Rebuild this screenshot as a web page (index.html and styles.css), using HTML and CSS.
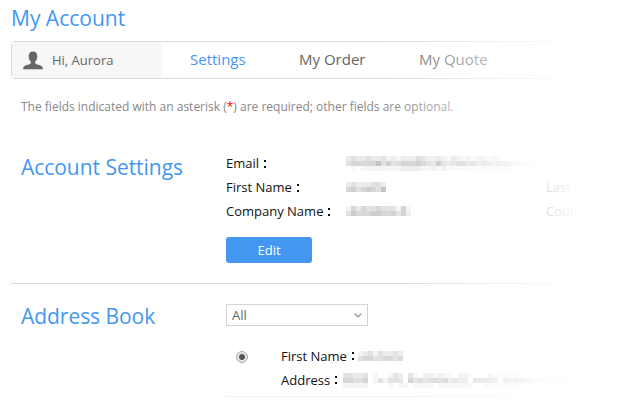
FILE: index.html
```html
<!DOCTYPE html>
<html lang="en">
<head>
<meta charset="utf-8">
<title>My Account</title>
<link rel="stylesheet" href="styles.css">
</head>
<body>
<main class="page">
  <h1>My Account</h1>
  <nav class="tabs">
    <div class="user">
      <svg class="avatar" width="20" height="19" viewBox="0 0 20 19"><path d="M10 .5C7.200.500 5.700 2.500 5.700 5.300c0 2.300.900 4.300 2.200 5.400v1.300c-.7 1.200-2 1.400-4.300 2.100C1.200 14.900.300 15.900 0 18.300h20c-.3-2.400-1.200-3.400-3.600-4.200-2.300-.7-3.600-.9-4.300-2.100v-1.300c1.300-1.100 2.200-3.100 2.200-5.400C14.300 2.500 12.800.500 10 .500z" fill="#666"/></svg>
      <span>Hi, Aurora</span>
    </div>
    <a class="tab active">Settings</a>
    <a class="tab order">My Order</a>
    <a class="tab quote">My Quote</a>
  </nav>
  <p class="note">The fields indicated with an asterisk (<b>*</b>) are required; other fields are optional.</p>
  <section class="account">
    <h2>Account Settings</h2>
    <div class="details">
      <div class="row"><span class="label">Email<i></i></span><span class="mask" data-rows="232232231212224322321321212212100000000/344444635345556543743455453443433221110/010111111112222112121111111111111000000"></span></div>
      <div class="row"><span class="label">First Name<i></i></span><span class="mask" data-rows="23222332/45345436"></span><span class="extra">Last Name</span></div>
      <div class="row"><span class="label">Company Name<i></i></span><span class="mask" data-rows="1424334333151/3544455445352"></span><span class="extra">Country</span></div>
      <button>Edit</button>
    </div>
  </section>
  <section class="address">
    <h2>Address Book</h2>
    <div class="book">
      <div class="select"><span>All</span><svg width="8" height="5" viewBox="0 0 8 5"><path d="M.7.700 4 3.700 7.300.700" fill="none" stroke="#999" stroke-width="1.500"/></svg></div>
      <div class="entry">
        <span class="radio"></span>
        <div class="lines">
          <div class="line">First Name<i></i><span class="mask" data-rows="123132232/344334434"></span></div>
          <div class="line">Address<i></i><span class="mask wide" data-rows="3322301001320310221211022100021111110000000000/4433401313330534345453433044443043433322111110/1111100001011011110111111100111111110000000000"></span></div>
        </div>
      </div>
    </div>
  </section>
  <div class="fade"></div>
</main>
<script src="masks.js"></script>
</body>
</html>
```
FILE: styles.css
```css
* { box-sizing: border-box; }
body { margin: 0; background: #fff; font: 13px/24px "Open Sans", sans-serif; color: #111; }
.page { position: relative; width: 625px; height: 400px; padding: 3px 0 0 11px; overflow: hidden; }
h1, h2 { margin: 0; font-weight: 400; color: #4497f1; font-size: 21px; line-height: 30px; }
.tabs { display: flex; align-items: center; height: 38px; margin-top: 8px; border: 1px solid #d9d9d9; border-radius: 4px 0 0 4px; font-size: 15px; }
.tab { position: relative; top: -1px; width: 110px; color: #666; }
.user { display: flex; align-items: center; width: 150px; height: 36px; padding-left: 11px; gap: 9px; background: #f7f7f7; font-size: 13px; color: #666; }
.tab.active { color: #4497f1; margin-left: 28px; width: 109px; }
.tab.order { width: 120px; }
.note { margin: 16px 0 0 10px; font-size: 12px; line-height: 24px; color: #888; white-space: nowrap; }
.note b { color: #f00; font-weight: 400; }
.account { display: flex; height: 165px; padding: 32px 0 0 10px; border-bottom: 1px solid #d9d9d9; }
h2 { width: 205px; flex: none; letter-spacing: -.04px; }
.account h2 { padding-top: 1px; }
.row { display: flex; align-items: center; height: 24px; white-space: nowrap; }
.details { flex: none; width: 390px; }
.label { width: 119px; flex: none; }
i { display: inline-block; width: 2px; height: 8px; margin-left: 5px; border: solid #111; border-width: 2px 0; }
.extra { margin-left: auto; width: 70px; color: #222; }
.mask svg { display: block; }
.row .mask { margin-left: 1px; }
button { display: block; width: 86px; height: 26px; margin-top: 14px; padding: 0; border: 0; border-radius: 3px; background: #4497f1; color: #fff; font: 13px/26px "Open Sans", sans-serif; }
.address { display: flex; padding: 20px 0 0 10px; }
.address h2 { margin-top: -3px; }
.select { display: flex; align-items: center; justify-content: space-between; width: 142px; height: 22px; padding: 0 5px; border: 1px solid #d4d4d4; color: #666; }
.entry { display: flex; width: 390px; height: 71px; padding-top: 18px; border-bottom: 1px solid #f2f2f2; }
.radio { width: 12px; height: 12px; margin: 7px 33px 0 10px; border: 1px solid #aaa; border-radius: 50%; background: radial-gradient(circle, #555 0 2.5px, #e4e4e4 3.5px); flex: none; }
.line { display: flex; align-items: center; height: 24px; white-space: nowrap; }
.line .mask { margin-left: 4px; }
.line .mask.wide { margin-left: 6px; }
.fade { position: absolute; inset: 0 0 0 auto; width: 250px; background: linear-gradient(90deg, rgba(255,255,255,0), #fff 82%); }
```
FILE: masks.js
```js
// Draw each concealed value as a mosaic; digits give the darkness of its cells.
document.querySelectorAll('.mask').forEach(mask => {
  const rows = mask.dataset.rows.split('/');
  const ns = 'http://www.w3.org/2000/svg';
  const svg = document.createElementNS(ns, 'svg');
  svg.setAttribute('width', rows[0].length * 5);
  svg.setAttribute('height', rows.length * 5);
  rows.forEach((row, y) => [...row].forEach((digit, x) => {
    const rect = document.createElementNS(ns, 'rect');
    const level = 255 - digit * 10;
    rect.setAttribute('x', x * 5);
    rect.setAttribute('y', y * 5);
    rect.setAttribute('width', 5);
    rect.setAttribute('height', 5);
    rect.setAttribute('fill', `rgb(${level},${level},${level + (digit > 4 ? 4 : 0)})`);
    svg.appendChild(rect);
  }));
  mask.appendChild(svg);
});
```
